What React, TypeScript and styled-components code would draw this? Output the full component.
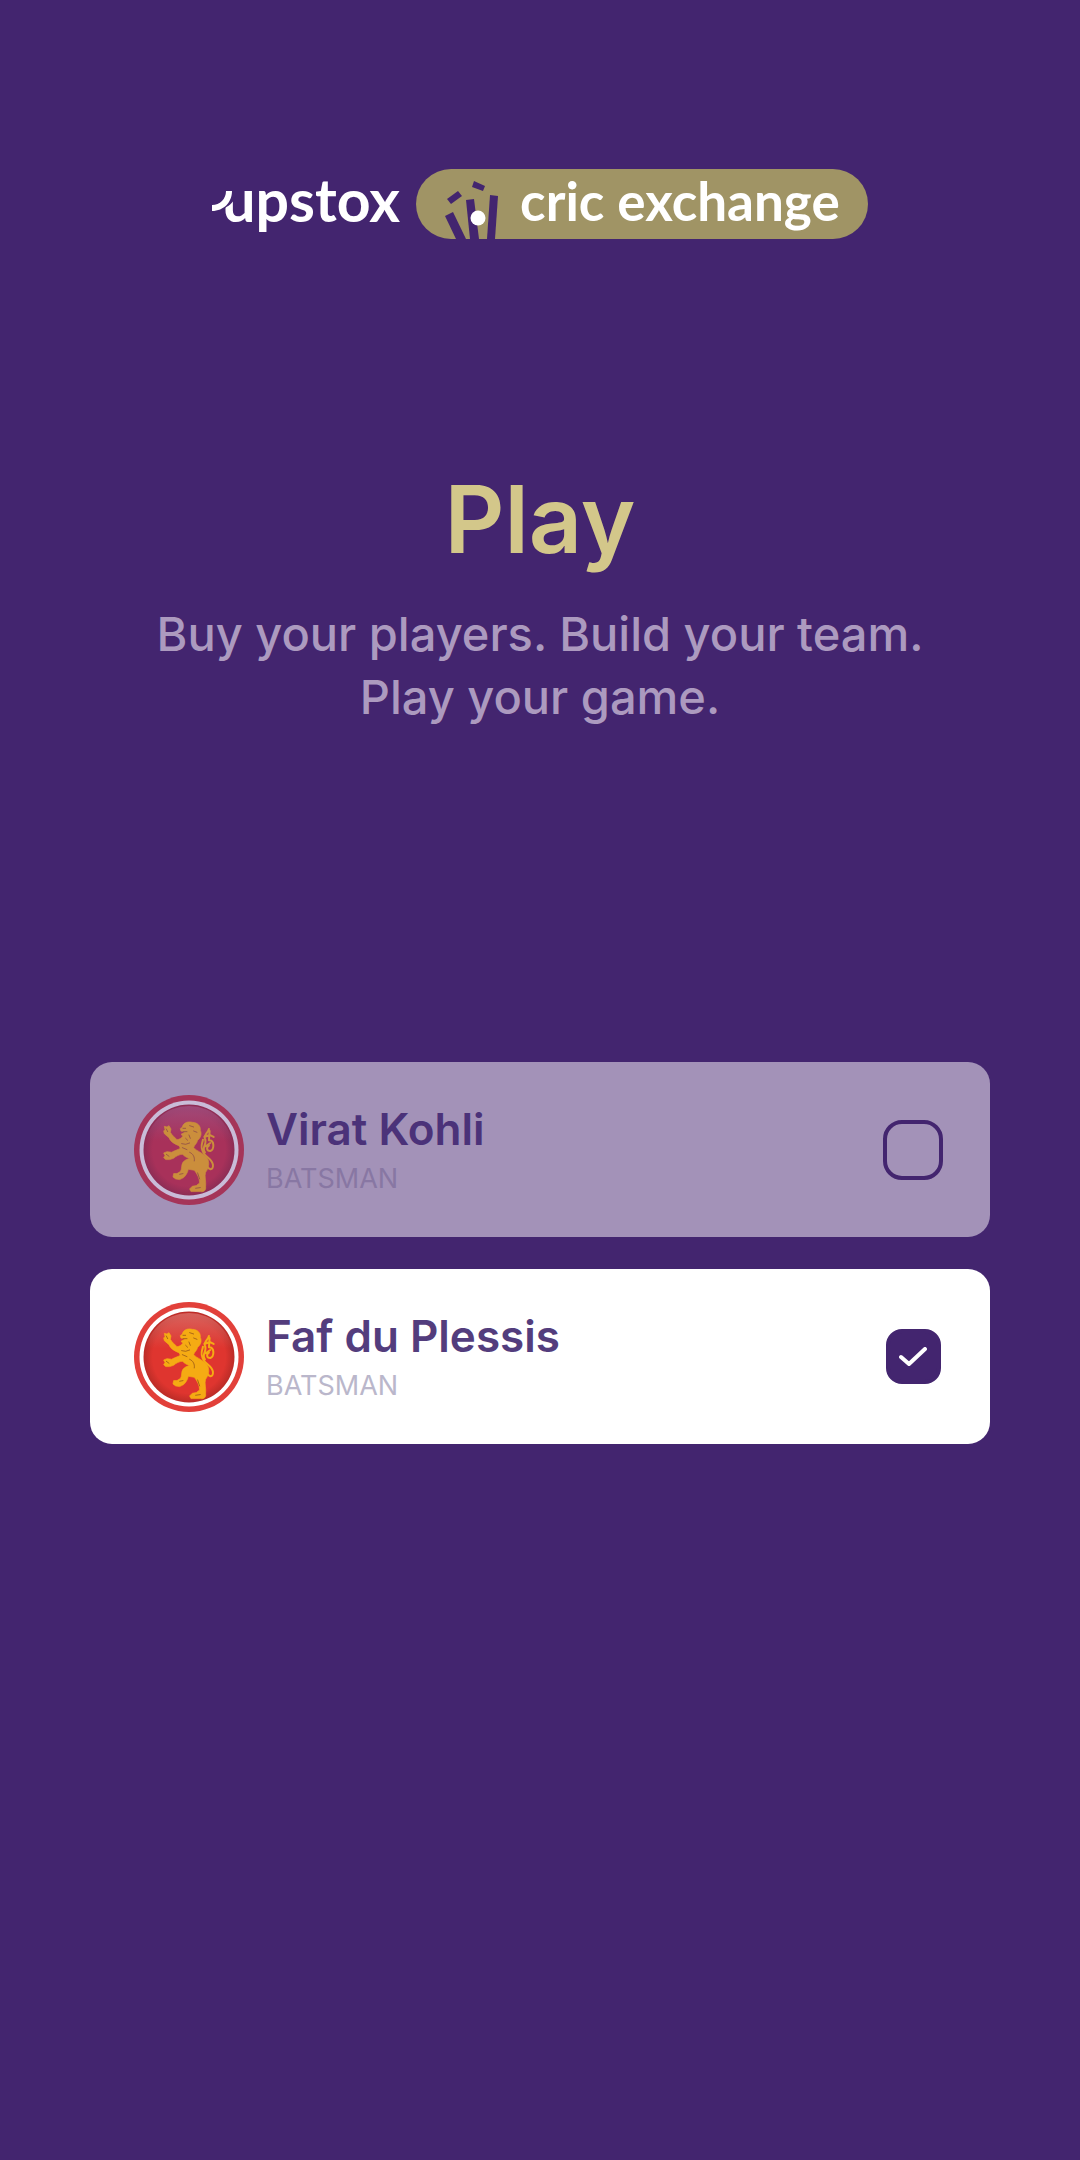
import React from 'react';
import styled, { createGlobalStyle } from 'styled-components';

const purple = '#43256f';

const GlobalStyle = createGlobalStyle`
  *, *::before, *::after { box-sizing: border-box; }
  body { margin: 0; background: ${purple}; font-family: Inter, "Liberation Sans", sans-serif; }
`;

const Page = styled.main`
  min-height: 100vh;
  display: flex;
  flex-direction: column;
  padding: 169px 90px 80px;
  background: ${purple};
`;

const Brand = styled.header`
  display: flex;
  justify-content: center;
  align-items: stretch;
  gap: 16px;
  height: 70px;
  font-family: Lato, sans-serif;
  color: #fff;
`;

const Upstox = styled.span`
  position: relative;
  padding-left: 10px;
  font-size: 59px;
  line-height: 62px;
  font-weight: 700;
`;

const Swoosh = styled.svg`
  position: absolute;
  left: 0;
  top: 20px;
`;

const Pill = styled.span`
  display: flex;
  gap: 22px;
  padding: 0 28px;
  border-radius: 35px;
  background: #a09465;
  font-size: 53px;
  line-height: 64px;
  font-weight: 700;
`;

const Intro = styled.section`
  margin-top: 220px;
  text-align: center;
`;

const Title = styled.h1`
  margin: 0;
  font-size: 93px;
  line-height: 120px;
  font-weight: 600;
  color: #d3c78a;
`;

const Lead = styled.p`
  margin: 23px 0 0;
  font-size: 47px;
  line-height: 63px;
  font-weight: 500;
  color: #ac9abf;
`;

const Players = styled.ul`
  display: flex;
  flex-direction: column;
  gap: 32px;
  margin: 334px 0 0;
  padding: 0;
  list-style: none;
`;

const Card = styled.label<{ $on: boolean }>`
  display: flex;
  align-items: center;
  gap: 22px;
  height: 175px;
  padding: 0 47px 0 44px;
  border-radius: 22px;
  background: ${p => (p.$on ? '#fff' : '#a392b8')};
`;

const Details = styled.span`
  flex: 1;
  display: flex;
  flex-direction: column;
`;

const Name = styled.span<{ $on: boolean }>`
  padding-top: 2px;
  font-size: 44px;
  line-height: 56px;
  font-weight: 600;
  color: ${p => (p.$on ? '#533d7d' : '#4b3279')};
`;

const Role = styled.span<{ $on: boolean }>`
  font-size: 27px;
  line-height: 44px;
  color: ${p => (p.$on ? '#bab7cb' : '#8877a3')};
`;

const Toggle = styled.span`
  display: grid;
  place-items: center;
  width: 60px;
  height: 60px;
`;

const Box = styled.input`
  grid-area: 1 / 1;
  appearance: none;
  width: 60px;
  height: 60px;
  margin: 0;
  border: 4px solid ${purple};
  border-radius: 19px;
  &:checked {
    width: 55px;
    height: 55px;
    border-radius: 16px;
    background: ${purple};
  }
`;

const Tick = styled.svg`
  grid-area: 1 / 1;
  pointer-events: none;
`;

function Stumps() {
  return (
    <svg width="54" height="70" viewBox="0 0 54 70" fill={purple} aria-hidden="true">
      <path d="M1 47 L9 43 L22 70 L12 70Z" />
      <path d="M22 31 L30 30 L35 70 L26 70Z" />
      <path d="M46 26 L54 27 L51 70 L43 70Z" />
      <path d="M3 30 L14 22 L18 27 L7 35Z" />
      <path d="M30 12 L41 17 L39 22 L28 18Z" />
      <circle cx="34" cy="49" r="7.5" fill="#fff" />
    </svg>
  );
}

function Crest({ on }: { on: boolean }) {
  const c = on
    ? { ring: '#e2403a', gap: '#fff', shine: '#d86862', mid: '#df352f', low: '#bb2c27', lion: '#f5ab13', ink: '#8a4a18' }
    : { ring: '#a53559', gap: '#c9bcd8', shine: '#a04c7c', mid: '#a8315a', low: '#8d2d55', lion: '#cb8e3c', ink: '#85424b' };
  const id = on ? 'crest-on' : 'crest-off';
  return (
    <svg width="110" height="110" viewBox="0 0 110 110" aria-hidden="true">
      <defs>
        <radialGradient id={id} cx="50%" cy="50%" r="50%">
          <stop offset="0" stopColor={c.mid} />
          <stop offset="0.8" stopColor={c.mid} />
          <stop offset="1" stopColor={c.low} />
        </radialGradient>
        <linearGradient id={`${id}-shine`} x1="0" y1="0" x2="0" y2="1">
          <stop offset="0" stopColor={c.shine} stopOpacity="0.9" />
          <stop offset="0.4" stopColor={c.shine} stopOpacity="0" />
        </linearGradient>
      </defs>
      <circle cx="55" cy="55" r="55" fill={c.ring} />
      <circle cx="55" cy="55" r="49.5" fill={c.gap} />
      <circle cx="55" cy="55" r="45.5" fill={`url(#${id})`} />
      <circle cx="55" cy="55" r="44" fill={`url(#${id}-shine)`} />
      <g transform="translate(21 20) scale(0.333)" strokeLinejoin="round" strokeLinecap="round">
        <path
          d="M152 140 C156 166 176 170 174 150 C172 132 154 128 146 114 C134 94 142 88 144 74 M150 112 C138 96 158 88 150 70 C146 58 158 56 162 42 M162 76 C180 76 178 104 166 108 C154 108 154 96 162 92 M164 48 L162 76 M148 66 L164 60 L176 66 M152 94 L166 84"
          fill="none" stroke={c.lion} strokeWidth="6"
        />
        <path
          fill={c.lion} stroke={c.lion} strokeWidth="2"
          d="M82 36 C84 24 98 18 112 22 C128 22 138 34 136 46 C142 58 136 70 128 76 C126 86 118 90 116 98 C124 108 146 114 157 130 C166 144 160 162 152 172 C148 184 154 200 152 216 C154 226 146 232 136 230 L108 230 L104 222 L112 214 L124 212 L134 204 C134 190 126 176 118 166 L100 163 C98 174 92 182 86 188 L74 194 L62 192 L54 186 L56 176 L66 176 L76 170 C82 162 78 150 84 142 C90 134 96 134 104 130 C92 128 88 122 82 118 C74 118 62 124 56 130 L44 134 L32 134 L26 128 L30 122 L26 114 L36 110 L50 112 C60 106 70 104 76 100 L72 92 C60 88 46 80 42 68 L28 56 L26 48 L30 44 L28 34 L36 36 L42 32 L48 42 L46 52 C52 62 60 68 66 74 C74 74 80 68 84 64 L78 58 L90 52 L78 48 L76 42Z"
        />
        <path
          d="M84 40 L92 40 M84 50 L96 50 M104 32 L116 36 M116 48 L126 52 M102 60 L106 70 M92 70 L98 76 M80 86 L92 88 L104 84 M82 98 L96 104 M104 112 C114 116 120 126 118 138 M128 174 L134 192 M74 178 L84 176 M122 220 L136 218 M34 42 L38 50 M34 118 L42 124"
          fill="none" stroke={c.ink} strokeWidth="3" opacity="0.7"
        />
      </g>
    </svg>
  );
}

function Player({ name, role, on }: { name: string; role: string; on: boolean }) {
  return (
    <li>
      <Card $on={on}>
        <Crest on={on} />
        <Details>
          <Name $on={on}>{name}</Name>
          <Role $on={on}>{role}</Role>
        </Details>
        <Toggle>
          <Box type="checkbox" defaultChecked={on} />
          {on && (
            <Tick width="28" height="20" viewBox="0 0 28 20" fill="none" stroke="#fff" strokeWidth="4" strokeLinecap="round" strokeLinejoin="round" aria-hidden="true">
              <path d="M2 10 L10 17 L26 2" />
            </Tick>
          )}
        </Toggle>
      </Card>
    </li>
  );
}

export default function App() {
  return (
    <>
      <GlobalStyle />
      <Page>
        <Brand>
          <Upstox>
            upstox
            <Swoosh width="24" height="24" viewBox="0 0 24 24" aria-hidden="true">
              <path d="M8 0H24V6C22 13 18 16 13 19H8Z" fill={purple} />
              <path d="M0 16 C8 16 14 10 14 2 H20 C20 13 12 22 0 22Z" fill="#fff" />
            </Swoosh>
          </Upstox>
          <Pill>
            <Stumps />
            cric exchange
          </Pill>
        </Brand>
        <Intro>
          <Title>Play</Title>
          <Lead>Buy your players. Build your team.<br />Play your game.</Lead>
        </Intro>
        <Players>
          <Player name="Virat Kohli" role="BATSMAN" on={false} />
          <Player name="Faf du Plessis" role="BATSMAN" on />
        </Players>
      </Page>
    </>
  );
}
